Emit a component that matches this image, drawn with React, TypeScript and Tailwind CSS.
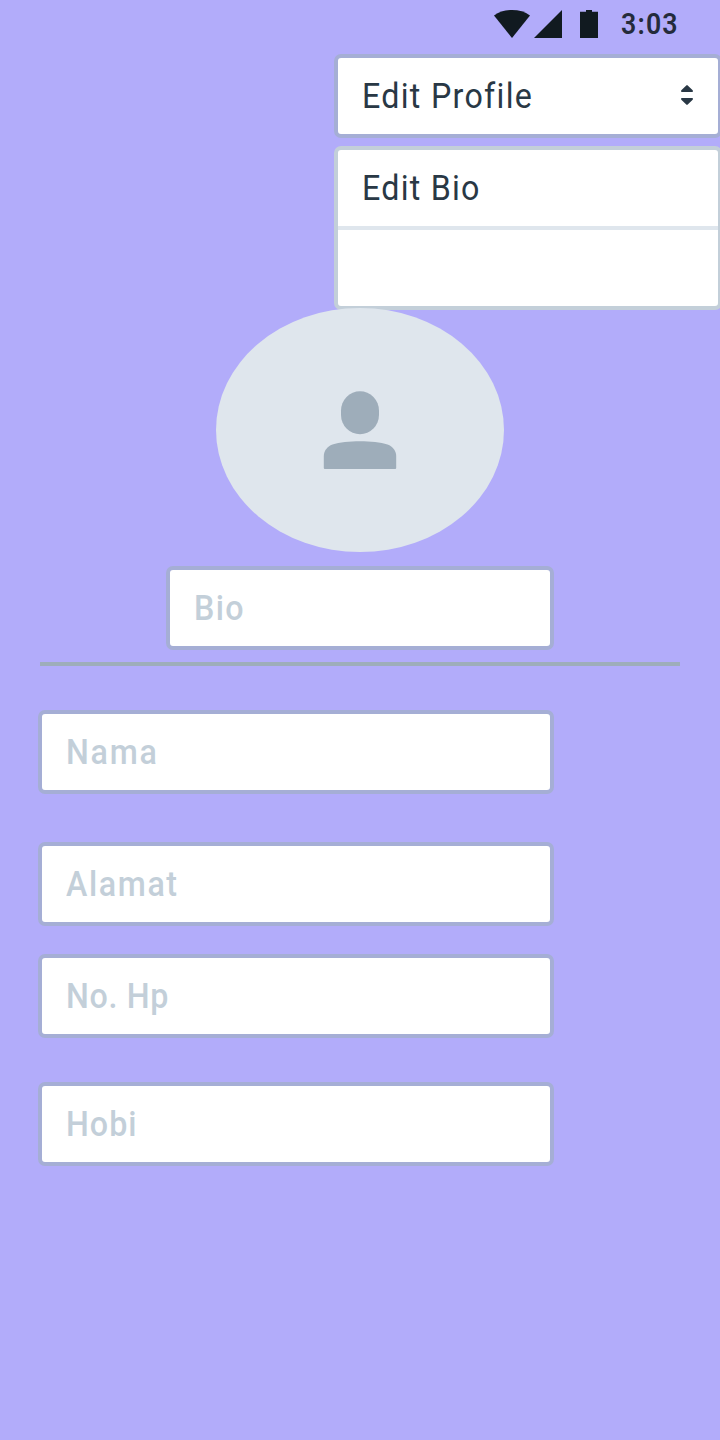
import type { ReactNode } from "react";

function StatusBar() {
  return (
    <header className="flex h-[54px] items-start pl-[494px]">
      <svg className="mt-[10px] h-7 w-9" viewBox="0 0 36 28" fill="#111a20">
        <path d="M0 5.6C5 1.8 11 0 18 0s13 1.8 18 5.6L18 28Z" />
      </svg>
      <svg className="mt-[10px] ml-1 size-7" viewBox="0 0 28 28" fill="#111a20">
        <path d="M0 28 28 0v28Z" />
      </svg>
      <svg className="mt-[10px] ml-[18px] h-7 w-[18px]" viewBox="0 0 18 28" fill="#111a20">
        <path d="M0 1.7h6V0h6v1.7h6V28H0Z" />
      </svg>
      <span className="mt-[4px] ml-[23px] origin-left scale-x-[0.92] text-[29px] leading-10 font-semibold tracking-[1.3px] whitespace-nowrap text-[#242b3b]">
        3:03
      </span>
    </header>
  );
}

function Field({ className, children }: { className: string; children: ReactNode }) {
  return (
    <div
      className={`flex h-[84px] shrink-0 items-center rounded-[7px] border-4 border-[#a5aed5] bg-white pt-0.5 pl-6 text-[35px] leading-[76px] font-medium whitespace-nowrap text-[#c3cfd9] ${className}`}
    >
      <span className="origin-left scale-x-[0.92]">{children}</span>
    </div>
  );
}

export default function App() {
  return (
    <main className="flex h-[1440px] w-[720px] flex-col overflow-hidden bg-[#b2acfa] font-['Roboto',sans-serif]">
      <StatusBar />

      <div className="ml-[334px] flex h-[84px] w-[388px] shrink-0 items-center justify-between rounded-[7px] border-4 border-[#a5aed5] bg-white pr-[25px] pl-6 text-[35px] text-[#293845]">
        <span className="origin-left scale-x-[0.92] pt-0.5 tracking-[1.4px] whitespace-nowrap">Edit Profile</span>
        <svg className="mb-0.5 h-5 w-3" viewBox="0 0 12 20" fill="#293845">
          <path d="M5.3.4Q6-.3 6.700.4L11.700 5.300Q12.300 7 11.300 7H.7Q-.3 7 .3 5.300ZM5.300 19.600Q6 20.300 6.700 19.600L11.700 14.700Q12.300 13 11.300 13H.7Q-.3 13 .3 14.700Z" />
        </svg>
      </div>

      <div className="mt-2 ml-[334px] h-[164px] w-[388px] shrink-0 rounded-[7px] border-4 border-[#c3cfd9] bg-white text-[35px] text-[#293845]">
        <div className="flex h-20 items-center border-b-4 border-[#dfe6ed] pt-0.5 pl-6">
          <span className="origin-left scale-x-[0.92] tracking-[1.35px] whitespace-nowrap">Edit Bio</span>
        </div>
      </div>

      <div className="relative -mt-0.5 flex h-[244px] w-72 shrink-0 items-center justify-center self-center rounded-[50%] bg-[#dfe6ed]">
        <svg className="h-[78px] w-[74px]" viewBox="0.5 0 74 78" fill="#9eadba">
          <rect x="18.500" y="0.300" width="38" height="43" rx="19" ry="19.500" />
          <path d="M1.300 77V65C1.300 60 4.500 55.500 10 53.500 17 51.200 27 50.300 37.500 50.300S58 51.200 65 53.500C70.500 55.500 73.700 60 73.700 65V77Q73.700 78 72.700 78H2.300Q1.300 78 1.300 77Z" />
        </svg>
      </div>

      <Field className="mt-[14px] ml-[166px] w-[388px] tracking-[1.5px]">Bio</Field>
      <hr className="mx-10 mt-3 h-1 shrink-0 border-0 bg-[#9eadba]" />
      <Field className="mt-[44px] ml-[38px] w-[516px] tracking-[1.9px]">Nama</Field>
      <Field className="mt-12 ml-[38px] w-[516px] tracking-[1.75px]">Alamat</Field>
      <Field className="mt-7 ml-[38px] w-[516px] tracking-[0.7px]">No. Hp</Field>
      <Field className="mt-[44px] ml-[38px] w-[516px] tracking-[1.1px]">Hobi</Field>
    </main>
  );
}
